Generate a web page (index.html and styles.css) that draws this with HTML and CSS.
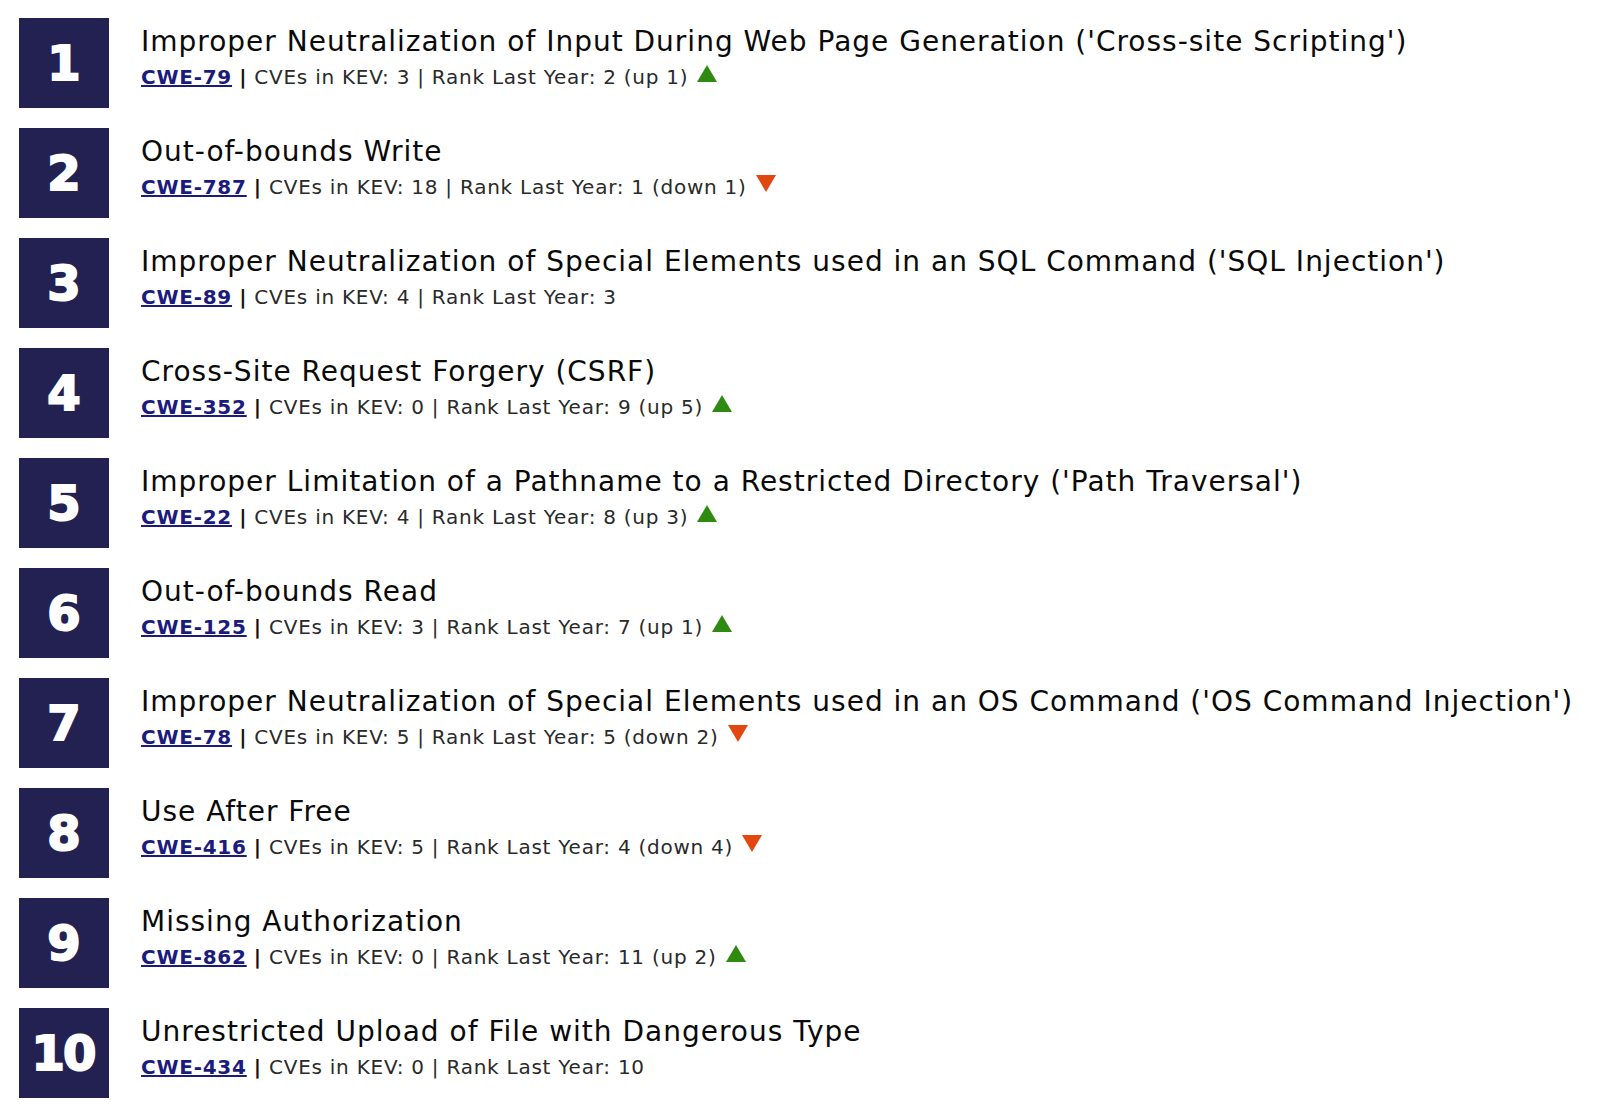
FILE: index.html
```html
<!DOCTYPE html>
<html>
<head>
<meta charset="utf-8">
<link rel="stylesheet" href="styles.css">
</head>
<body>
<ol class="list">
  <li class="item">
    <div class="rank">1</div>
    <div class="info">
      <div class="title">Improper Neutralization of Input During Web Page Generation ('Cross-site Scripting')</div>
      <div class="meta"><a class="cwe" href="#">CWE-79</a> <b class="bar">|</b> CVEs in KEV: 3 | Rank Last Year: 2 (up 1) <span class="up"></span></div>
    </div>
  </li>
  <li class="item">
    <div class="rank">2</div>
    <div class="info">
      <div class="title">Out-of-bounds Write</div>
      <div class="meta"><a class="cwe" href="#">CWE-787</a> <b class="bar">|</b> CVEs in KEV: 18 | Rank Last Year: 1 (down 1) <span class="down"></span></div>
    </div>
  </li>
  <li class="item">
    <div class="rank">3</div>
    <div class="info">
      <div class="title">Improper Neutralization of Special Elements used in an SQL Command ('SQL Injection')</div>
      <div class="meta"><a class="cwe" href="#">CWE-89</a> <b class="bar">|</b> CVEs in KEV: 4 | Rank Last Year: 3</div>
    </div>
  </li>
  <li class="item">
    <div class="rank">4</div>
    <div class="info">
      <div class="title">Cross-Site Request Forgery (CSRF)</div>
      <div class="meta"><a class="cwe" href="#">CWE-352</a> <b class="bar">|</b> CVEs in KEV: 0 | Rank Last Year: 9 (up 5) <span class="up"></span></div>
    </div>
  </li>
  <li class="item">
    <div class="rank">5</div>
    <div class="info">
      <div class="title">Improper Limitation of a Pathname to a Restricted Directory ('Path Traversal')</div>
      <div class="meta"><a class="cwe" href="#">CWE-22</a> <b class="bar">|</b> CVEs in KEV: 4 | Rank Last Year: 8 (up 3) <span class="up"></span></div>
    </div>
  </li>
  <li class="item">
    <div class="rank">6</div>
    <div class="info">
      <div class="title">Out-of-bounds Read</div>
      <div class="meta"><a class="cwe" href="#">CWE-125</a> <b class="bar">|</b> CVEs in KEV: 3 | Rank Last Year: 7 (up 1) <span class="up"></span></div>
    </div>
  </li>
  <li class="item">
    <div class="rank">7</div>
    <div class="info">
      <div class="title">Improper Neutralization of Special Elements used in an OS Command ('OS Command Injection')</div>
      <div class="meta"><a class="cwe" href="#">CWE-78</a> <b class="bar">|</b> CVEs in KEV: 5 | Rank Last Year: 5 (down 2) <span class="down"></span></div>
    </div>
  </li>
  <li class="item">
    <div class="rank">8</div>
    <div class="info">
      <div class="title">Use After Free</div>
      <div class="meta"><a class="cwe" href="#">CWE-416</a> <b class="bar">|</b> CVEs in KEV: 5 | Rank Last Year: 4 (down 4) <span class="down"></span></div>
    </div>
  </li>
  <li class="item">
    <div class="rank">9</div>
    <div class="info">
      <div class="title">Missing Authorization</div>
      <div class="meta"><a class="cwe" href="#">CWE-862</a> <b class="bar">|</b> CVEs in KEV: 0 | Rank Last Year: 11 (up 2) <span class="up"></span></div>
    </div>
  </li>
  <li class="item">
    <div class="rank">10</div>
    <div class="info">
      <div class="title">Unrestricted Upload of File with Dangerous Type</div>
      <div class="meta"><a class="cwe" href="#">CWE-434</a> <b class="bar">|</b> CVEs in KEV: 0 | Rank Last Year: 10</div>
    </div>
  </li>
</ol>
</body>
</html>
```
FILE: styles.css
```css
html, body {
  margin: 0;
  padding: 0;
  background: #ffffff;
}
body {
  font-family: "DejaVu Sans", Verdana, sans-serif;
}
.list {
  list-style: none;
  margin: 0;
  padding: 18px 0 0 19px;
  display: flex;
  flex-direction: column;
  gap: 20px;
}
.item {
  display: flex;
  align-items: flex-start;
  gap: 32px;
}
.rank {
  width: 90px;
  height: 90px;
  flex: none;
  background: #222152;
  color: #ffffff;
  font-weight: bold;
  font-size: 48px;
  display: flex;
  align-items: center;
  justify-content: center;
  letter-spacing: -2px;
  -webkit-text-stroke: 2px #ffffff;
  padding-right: 2px;
  box-sizing: border-box;
}
.info {
  padding-top: 7px;
}
.title {
  font-size: 28px;
  line-height: 34px;
  letter-spacing: 1px;
  color: #0a0a0a;
  white-space: nowrap;
}
.meta {
  margin-top: 6px;
  font-size: 20px;
  line-height: 24px;
  letter-spacing: 0.75px;
  color: #2a2a2a;
  white-space: nowrap;
}
.cwe {
  color: #1b1b7e;
  font-weight: bold;
  text-decoration: underline;
}
.bar {
  color: #111111;
}
.up, .down {
  display: inline-block;
  width: 0;
  height: 0;
  margin-left: 2px;
  border-left: 10px solid transparent;
  border-right: 10px solid transparent;
  vertical-align: 2px;
}
.up {
  border-bottom: 17px solid #2f8a12;
}
.down {
  border-top: 17px solid #e2470f;
}
```
